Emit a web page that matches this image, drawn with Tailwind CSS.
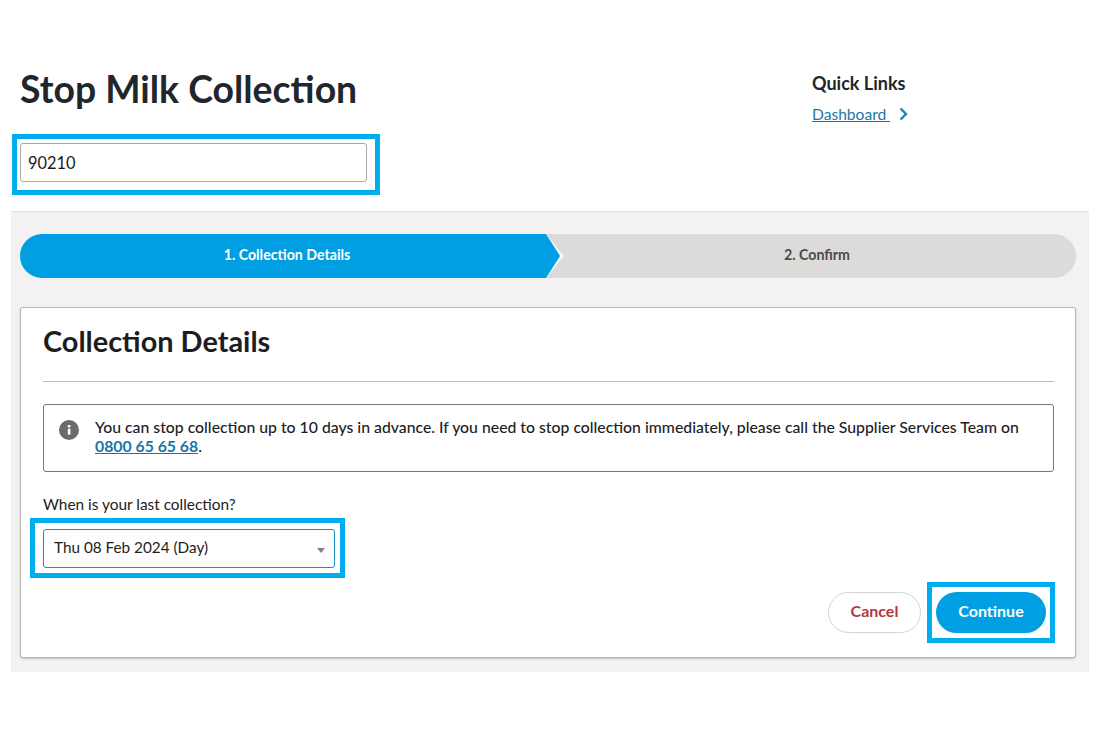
<!DOCTYPE html>
<html lang="en">
<head>
  <meta charset="UTF-8">
  <title>Stop Milk Collection</title>
  <script src="https://cdn.jsdelivr.net/npm/@tailwindcss/browser@4"></script>
</head>
<body class="bg-white font-['Lato','Noto_Sans',sans-serif] text-[#1d1d1f]">
  <div class="w-[1100px] h-[733px] overflow-hidden pt-[66px]">
    <!-- page header -->
    <div class="flex h-[145px]">
      <div class="ml-[12px] w-[368px]">
        <h1 class="ml-[8px] h-[68px] text-[37.4px] leading-[46px] font-bold text-[#20262b]">Stop Milk Collection</h1>
        <div class="border-[5px] border-[#00aeef] pt-[4px] pl-[3px] w-[368px] h-[61px]">
          <input value="90210" class="w-[347px] h-[39px] border border-[#a8a8a8] rounded-[3px] px-[7px] text-[16.4px] text-[#1a1a1a] bg-white">
        </div>
      </div>
      <div class="ml-[432px] pt-[6px]">
        <h2 class="text-[18px] leading-[22px] font-bold text-[#20262b]">Quick Links</h2>
        <div class="mt-[10px] flex items-center gap-[9px]">
          <a class="text-[15.6px] leading-[20px] text-[#1877a8] underline whitespace-pre">Dashboard </a>
          <svg width="9" height="14" viewBox="0 0 9 14" fill="none" stroke="#1d83b5" stroke-width="2.4"><path d="M1.5 1.5 7 7l-5.5 5.5"/></svg>
        </div>
      </div>
    </div>

    <!-- grey panel -->
    <div class="ml-[11px] w-[1078px] h-[461px] bg-[#f3f1f1] border-t border-[#e2e2e2] px-[9px] pt-[22px]">
      <!-- stepper -->
      <div class="flex h-[44px] w-[1056px] rounded-full overflow-hidden bg-[#dddbda]">
        <div class="w-[544px] h-full bg-[#f6f6f6] [clip-path:polygon(0_0,526px_0,544px_50%,526px_100%,0_100%)]">
          <div class="flex items-center justify-center w-[540px] h-full pr-[6px] pb-[2px] bg-[#009fe3] text-white text-[14.2px] font-bold [clip-path:polygon(0_0,526px_0,540px_50%,526px_100%,0_100%)]">1. Collection Details</div>
        </div>
        <div class="flex-1 flex items-center justify-center pr-[6px] pb-[2px] text-[14.2px] font-bold text-[#4a4a4a]">2. Confirm</div>
      </div>

      <!-- card -->
      <div class="mt-[29px] w-[1056px] h-[351px] bg-white border border-[#b5b5b5] rounded-[3px] shadow-[0_1px_2px_rgba(0,0,0,0.2)] pl-[22px] pr-[21px]">
        <h2 class="h-[74px] pt-[15px] text-[28.9px] leading-[36px] font-bold text-[#1d1d1f] border-b border-[#bdbdbd]">Collection Details</h2>
        <div class="mt-[22px] h-[68px] border border-[#777] rounded-[3px] flex pl-[15px] pr-[20px] pt-[12px]">
          <svg class="mt-[3px] shrink-0" width="20" height="20" viewBox="0 0 20 20"><circle cx="10" cy="10" r="10" fill="#6b6b6b"/><rect x="8.8" y="8.6" width="2.6" height="6" fill="#fff"/><rect x="8.8" y="5" width="2.6" height="2.4" fill="#fff"/></svg>
          <p class="ml-[16px] text-[15.8px] leading-[19px] font-medium text-[#1d1d1f]">You can stop collection up to 10 days in advance. If you need to stop collection immediately, please call the Supplier Services Team on <a class="text-[#1877a8] underline font-bold">0800 65 65 68</a>.</p>
        </div>
        <label class="block mt-[22px] text-[15.4px] leading-[20px] text-[#222]">When is your last collection?</label>
        <div class="-ml-[13px] mt-[4px] border-[5px] border-[#00aeef] pt-[6px] pl-[8px] w-[315px] h-[60px]">
          <div class="relative w-[292px] h-[39px] border border-[#1b8fc4] rounded-[3px] flex items-center pl-[10px] pb-[2px] text-[15.3px] text-[#222]">
            Thu 08 Feb 2024 (Day)
            <span class="absolute right-[9px] top-[18px] w-0 h-0 border-x-[4px] border-x-transparent border-t-[5px] border-t-[#808080]"></span>
          </div>
        </div>
        <div class="flex justify-end gap-[6px] -mr-[1px] mt-[4px]">
          <button class="mt-[10px] w-[93px] h-[41px] pb-[3px] rounded-full border border-[#d4d4d4] bg-white text-[16px] font-bold text-[#b2393f]">Cancel</button>
          <div class="border-[5px] border-[#00aeef] pt-[5px] pl-[4px] w-[128px] h-[61px]">
            <button class="w-[110px] h-[41px] pb-[3px] rounded-full bg-[#009fe3] text-white text-[16px] font-bold">Continue</button>
          </div>
        </div>
      </div>
    </div>
  </div>
</body>
</html>
